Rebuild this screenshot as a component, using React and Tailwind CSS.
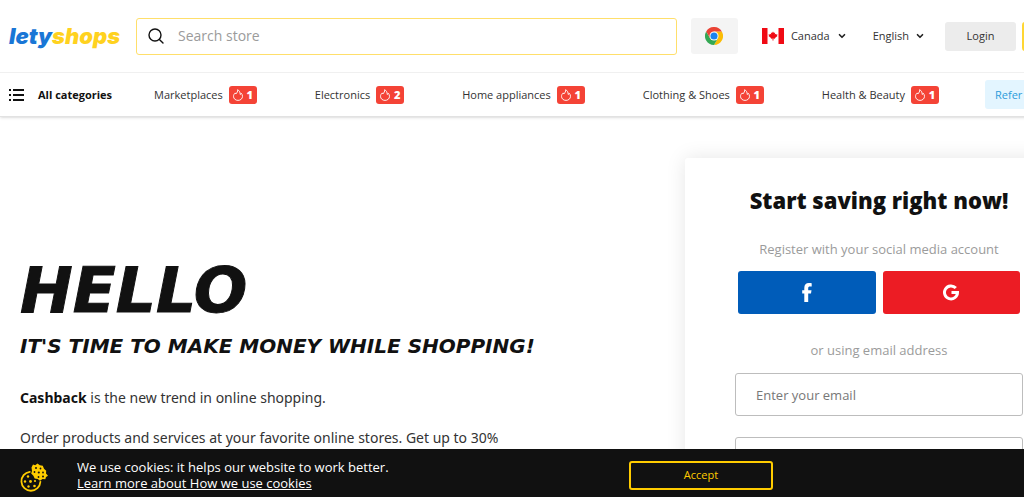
import React, { useState } from 'react';
import { ChevronDown } from 'lucide-react';

const categories = [
    { name: 'Marketplaces', hot: 1 },
    { name: 'Electronics', hot: 2 },
    { name: 'Home appliances', hot: 1 },
    { name: 'Clothing & Shoes', hot: 1 },
    { name: 'Health & Beauty', hot: 1 },
];

const SearchIcon = () => (
    <svg width="16" height="16" viewBox="0 0 16 16" fill="none" stroke="#111" strokeWidth="1.4" strokeLinecap="round">
        <circle cx="7" cy="7" r="6" />
        <path d="M11.4 11.4 15 15" />
    </svg>
);

const ListIcon = () => (
    <svg width="15" height="12" viewBox="0 0 15 12" fill="#111">
        <path d="M0 0h2v2H0zM4 0h11v2H4zM0 5h2v2H0zM4 5h11v2H4zM0 10h2v2H0zM4 10h11v2H4z" />
    </svg>
);

const FireIcon = () => (
    <svg width="10" height="12" viewBox="0 0 10 12" fill="none" stroke="#fff" strokeWidth="0.9" strokeLinejoin="round">
        <path d="M4.6.7C5.2 2.600 3.600 3.800 2.900 5 2.600 4.700 2.400 4.300 2.300 3.900 1 5 .5 6.200.5 7.300c0 2.400 2 4.100 4.500 4.100s4.500-1.700 4.500-4.100c0-1.200-.5-2.200-1.200-3-.2.6-.6 1-1.100 1.200C7.300 3.500 6.500 1.700 4.600.7z" />
    </svg>
);

const ChromeIcon = () => (
    <svg width="18" height="18" viewBox="0 0 48 48">
        <path d="M24 24V12h20.800A24 24 0 0 1 24 48l10.400-18z" fill="#fbbc05" />
        <path d="M24 24 34.400 30 24 48A24 24 0 0 1 3.200 12l10.400 18z" fill="#34a853" />
        <path d="M3.200 12A24 24 0 0 1 44.800 12H24L13.600 30z" fill="#ea4335" />
        <circle cx="24" cy="24" r="12" fill="#fff" />
        <circle cx="24" cy="24" r="9.500" fill="#1a83f0" />
    </svg>
);

const CanadaFlag = () => (
    <svg width="22" height="16" viewBox="0 0 22 16">
        <rect width="22" height="16" fill="#fff" />
        <path d="M0 0h5.500v16H0zM16.500 0H22v16h-5.500z" fill="#f00a14" />
        <path d="m11 3.500 1 1.500 1.100-.4-.3 1.900 1-.7.4.6 1.300-.1-.5 1.200.5.500-2.500 1.900.1.900-1.700-.2.100 1.900h-1l.1-1.900-1.700.2.100-.9L6.500 8l.5-.5-.5-1.200 1.300.1.400-.6 1 .7-.3-1.900L10 5z" fill="#f00a14" />
    </svg>
);

const FacebookIcon = () => (
    <svg width="10" height="19" viewBox="0 0 10 19" fill="#fff">
        <path d="M2.300 19V10.600H.2V7.200h2.100V5C2.300 1.800 4 .1 6.800.1c1.200 0 2.300.1 2.900.2v3.100H8c-1.400 0-1.800.7-1.800 1.700v2.100h3.300L9 10.600H6.200V19z" />
    </svg>
);

const GoogleIcon = () => (
    <svg width="16" height="17" viewBox="0 0 16 17" fill="none" stroke="#fff" strokeWidth="3">
        <path d="M12.800 4A6.500 6.500 0 1 0 14.500 8.500H8.500" />
    </svg>
);

const CookieIcon = () => (
    <svg width="29" height="29" viewBox="0 0 29 29">
        <path d="M9.800 8.800A9.500 9.500 0 1 0 20.400 18.800" fill="none" stroke="#fc0" strokeWidth="1.800" strokeLinecap="round" />
        <path d="M11.500 4.500 13 1.600l2.200.6L17.500.5l2.300 1.800 3 .5 1.200 3 2.200 2-.2 2.700 2 2.200-2 1.300-.7 2.200-2.800-.2-2.500 1.800-2.300-1.700-3-.5-1.300-2.800-2.200-2.200.8-2.600z" fill="#fc0" />
        <g fill="#111">
            <circle cx="16" cy="5" r="1" />
            <circle cx="20.500" cy="5.500" r="0.900" />
            <circle cx="14.500" cy="9" r="0.900" />
            <circle cx="18.800" cy="9.500" r="1.100" />
            <circle cx="23" cy="9.500" r="0.900" />
            <circle cx="18.500" cy="14" r="0.900" />
            <circle cx="23" cy="13.500" r="1" />
        </g>
        <g fill="#fc0">
            <circle cx="8" cy="13.500" r="1.200" />
            <circle cx="5" cy="18.500" r="1.200" />
            <circle cx="10.500" cy="18.500" r="1.400" />
            <circle cx="15" cy="18" r="1.100" />
            <circle cx="8.500" cy="23.500" r="1.200" />
            <circle cx="14.500" cy="23" r="1.300" />
        </g>
    </svg>
);

const Header = () => (
    <header className="border-b border-[#e2e2e2] shadow-sm">
        <div className="flex h-[73px] items-center border-b border-[#f0f0f0] px-[9px]">
            <a href="#" className="w-[127px] shrink-0 font-['Inter',sans-serif] text-[22px] leading-8 font-black italic text-[#1976d6]">
                lety<span className="text-[#ffd21f]">shops</span>
            </a>
            <label className="flex h-[37px] flex-1 items-center gap-[14px] rounded-[3px] border border-[#ffdf6b] px-[11px]">
                <SearchIcon />
                <input type="search" aria-label="Search store" placeholder="Search store" className="min-w-0 flex-1 text-sm text-[#111] outline-none placeholder:text-[#9b9b9b]" />
            </label>
            <button aria-label="Install extension" className="ml-[14px] flex h-9 w-[47px] items-center justify-center rounded-[3px] bg-[#f4f4f4]">
                <ChromeIcon />
            </button>
            <button className="ml-6 flex items-center gap-[7px]">
                <CanadaFlag />
                Canada
                <ChevronDown size={10} strokeWidth={4} className="text-[#222]" />
            </button>
            <button className="ml-[26px] flex items-center gap-[6px]">
                English
                <ChevronDown size={10} strokeWidth={4} className="text-[#222]" />
            </button>
            <button className="ml-5 h-[29px] w-[71px] rounded-[3px] bg-[#ececec]">Login</button>
            <button className="ml-[6px] h-[29px] w-[62px] rounded-[3px] bg-[#ffd633]">Sign up</button>
        </div>
        <nav className="flex h-[43px] items-center justify-between px-[9px]">
            <button className="-mr-4 flex items-center gap-[14px] font-bold text-[#111]">
                <ListIcon />
                All categories
            </button>
            {categories.map((c) => (
                <a key={c.name} href="#" className="flex items-center gap-[6px] whitespace-nowrap">
                    {c.name}
                    <span className="flex h-[18px] w-7 items-center justify-center gap-1 rounded-[3px] bg-[#f44336] font-extrabold text-white">
                        <FireIcon />
                        {c.hot}
                    </span>
                </a>
            ))}
            <a href="#" className="-ml-3 flex h-[29px] w-[99px] items-center rounded-[3px] bg-[#e3f5ff] px-[10px] whitespace-nowrap text-[#2d9cdb]">
                Refer a friend
            </a>
        </nav>
    </header>
);

const SignUpCard = () => {
    const [email, setEmail] = useState('');
    const [password, setPassword] = useState('');

    return (
        <form className="mt-[41px] w-[388px] shrink-0 rounded-[3px] bg-white px-[50px] pt-[26px] pb-10 text-center shadow-[0_0_20px_rgba(0,0,0,0.1)]">
            <h2 className="text-[22px] leading-8 font-extrabold text-[#111]">Start saving right now!</h2>
            <p className="mt-[23px] text-[13px] leading-5 text-[#9b9b9b]">Register with your social media account</p>
            <div className="mt-3 grid grid-cols-2 gap-[7px] px-[3px]">
                <button type="button" aria-label="Facebook" className="flex h-[43px] items-center justify-center rounded-[3px] bg-[#005cb9]">
                    <FacebookIcon />
                </button>
                <button type="button" aria-label="Google" className="flex h-[43px] items-center justify-center rounded-[3px] bg-[#ec1c24]">
                    <GoogleIcon />
                </button>
            </div>
            <p className="mt-[26px] text-[13px] leading-5 text-[#9b9b9b]">or using email address</p>
            <input type="email" aria-label="Email" value={email} onChange={(e) => setEmail(e.target.value)} placeholder="Enter your email" className="mt-[13px] block h-[43px] w-full rounded-[3px] border border-[#bdbdbd] px-5 text-[13px] placeholder:text-[#777]" />
            <input type="password" aria-label="Password" value={password} onChange={(e) => setPassword(e.target.value)} className="mt-[21px] block h-[43px] w-full rounded-[3px] border border-[#bdbdbd] px-5 text-[13px]" />
        </form>
    );
};

const CookieBar = () => (
    <footer className="flex h-12 shrink-0 items-center bg-[#111] pl-5 text-white">
        <div className="mt-2 w-[57px]">
            <CookieIcon />
        </div>
        <p className="mt-1 flex-1 text-[13px] leading-4">
            We use cookies: it helps our website to work better.
            <br />
            <a href="#" className="underline">Learn more about How we use cookies</a>
        </p>
        <button className="mt-1 mr-[251px] h-[29px] w-36 rounded-[3px] border-2 border-[#fc0] text-[#fc0]">Accept</button>
    </footer>
);

const App = () => (
    <div className="flex h-screen flex-col bg-white font-['Open_Sans',sans-serif] text-[11px] leading-4 text-[#333]">
        <div className="min-h-0 flex-1 overflow-auto [scrollbar-width:none]">
            <div className="min-w-[1093px]">
                <Header />
                <main className="flex items-start justify-between px-5">
                    <section className="mt-[138px] w-[560px]">
                        <h1 className="font-['DejaVu_Sans',sans-serif] font-bold text-[#111] italic">
                            <span className="block text-[63px] leading-[72px] [-webkit-text-stroke:1px_#111]">HELLO</span>
                            <span className="mt-[3px] block text-xl leading-8 whitespace-nowrap">IT'S TIME TO MAKE MONEY WHILE SHOPPING!</span>
                        </h1>
                        <p className="mt-6 font-['Noto_Sans',sans-serif] text-sm leading-6">
                            <strong className="text-[#111]">Cashback</strong> is the new trend in online shopping.
                        </p>
                        <p className="mt-4 font-['Noto_Sans',sans-serif] text-sm leading-6">
                            Order products and services at your favorite online stores. Get up to 30%
                        </p>
                    </section>
                    <SignUpCard />
                </main>
            </div>
        </div>
        <CookieBar />
    </div>
);

export default App;
